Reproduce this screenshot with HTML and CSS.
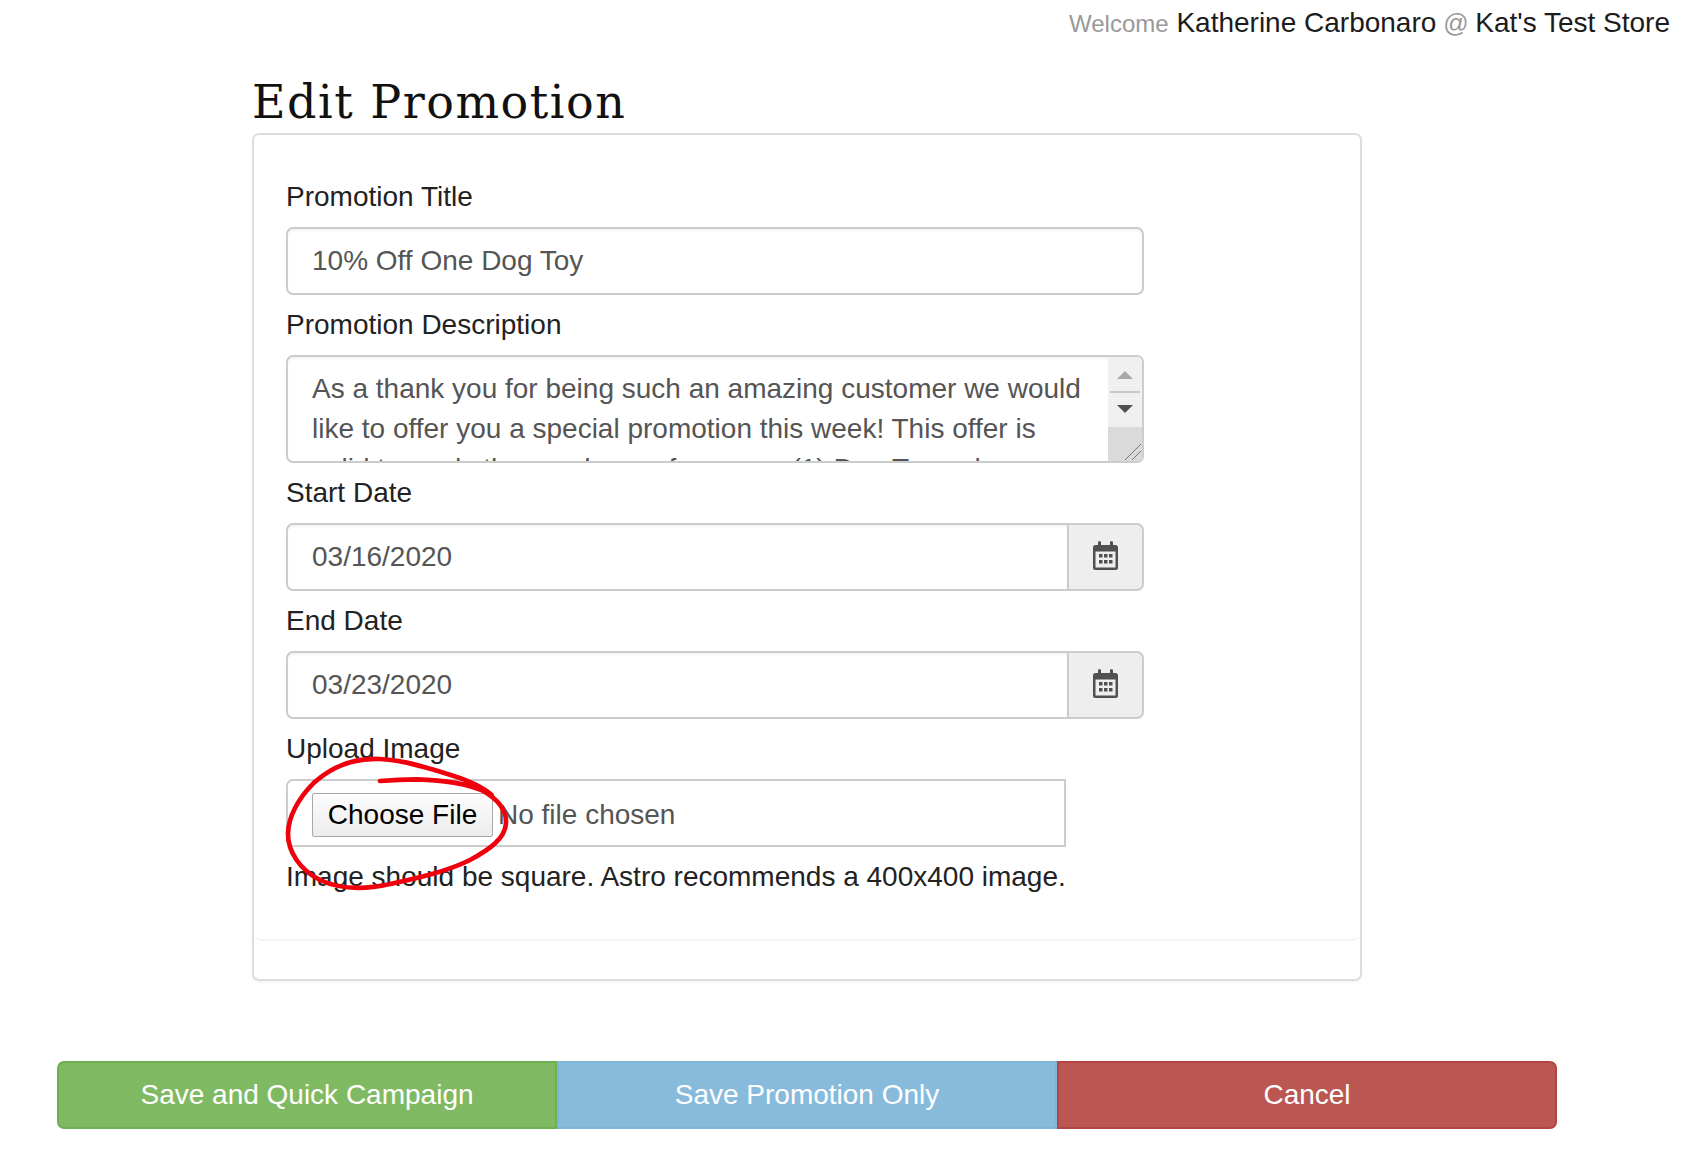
FILE: index.html
```html
<!DOCTYPE html>
<html lang="en">
<head>
<meta charset="utf-8">
<title>Edit Promotion</title>
<link rel="stylesheet" href="styles.css">
</head>
<body>
<header class="topbar">
  <span class="muted">Welcome</span> <span class="strong">Katherine Carbonaro</span> <span class="at">@</span> <span class="strong">Kat's Test Store</span>
</header>
<main class="page">
  <h1 class="title">Edit Promotion</h1>
  <section class="panel">
    <form class="panel-body">
      <div class="column">
        <label class="label">Promotion Title</label>
        <input class="control" type="text" value="10% Off One Dog Toy">
        <label class="label">Promotion Description</label>
        <div class="textarea-wrap">
          <textarea class="textarea" rows="3">As a thank you for being such an amazing customer we would like to offer you a special promotion this week! This offer is valid towards the purchase of one any (1) Dog Toy only.</textarea>
          <div class="scrollbar">
            <svg class="sb-arrows" width="34" height="104" viewBox="0 0 34 104" aria-hidden="true">
              <path d="M9 22 L17 14 L25 22 Z" fill="#a9a9a9"/>
              <rect x="2" y="34" width="30" height="2" fill="#c8c8c8"/>
              <path d="M9 48 L25 48 L17 56 Z" fill="#505050"/>
              <rect x="0" y="70" width="34" height="34" fill="#dadada"/>
              <path d="M17 103 L33 87 M24 103 L33 94" stroke="#777" stroke-width="1" fill="none"/>
            </svg>
          </div>
        </div>
        <label class="label">Start Date</label>
        <div class="date-group">
          <input class="control date-input" type="text" value="03/16/2020">
          <span class="addon">
            <svg class="cal" width="25" height="29" viewBox="0 0 25 29" aria-hidden="true"><path d="M2.5 4H5V1.5a1.5 1.5 0 0 1 3 0V4h9V1.5a1.5 1.5 0 0 1 3 0V4h2.500A2.500 2.500 0 0 1 25 6.500v20a2.500 2.500 0 0 1-2.500 2.500h-20A2.500 2.500 0 0 1 0 26.500v-20A2.500 2.500 0 0 1 2.500 4Z M2.500 10.500V26a.5.5 0 0 0 .5.5h19a.5.500 0 0 0 .5-.5V10.500Z" fill="#505050" fill-rule="evenodd"/><path d="M6 13h3.500v3.500H6zM11 13h3.500v3.500H11zM16 13h3.500v3.500H16zM6 19h3.500v3.500H6zM11 19h3.500v3.500H11zM16 19h3.500v3.500H16z" fill="#505050"/></svg>
          </span>
        </div>
        <label class="label">End Date</label>
        <div class="date-group">
          <input class="control date-input" type="text" value="03/23/2020">
          <span class="addon">
            <svg class="cal" width="25" height="29" viewBox="0 0 25 29" aria-hidden="true"><path d="M2.5 4H5V1.5a1.5 1.5 0 0 1 3 0V4h9V1.5a1.5 1.5 0 0 1 3 0V4h2.500A2.500 2.500 0 0 1 25 6.500v20a2.500 2.500 0 0 1-2.500 2.500h-20A2.500 2.500 0 0 1 0 26.500v-20A2.500 2.500 0 0 1 2.500 4Z M2.500 10.500V26a.5.5 0 0 0 .5.5h19a.5.500 0 0 0 .5-.5V10.500Z" fill="#505050" fill-rule="evenodd"/><path d="M6 13h3.500v3.500H6zM11 13h3.500v3.500H11zM16 13h3.500v3.500H16zM6 19h3.500v3.500H6zM11 19h3.500v3.500H11zM16 19h3.500v3.500H16z" fill="#505050"/></svg>
          </span>
        </div>
        <label class="label">Upload Image</label>
        <div class="file-row">
          <button class="file-btn" type="button">Choose File</button>
          <span class="file-name">No file chosen</span>
          <svg class="scribble" width="300" height="170" viewBox="0 0 900 510" aria-hidden="true">
            <path d="M665 195 C640 172 590 148 520 128 C450 108 400 90 330 87 C260 84 190 105 130 160 C85 205 55 260 54 310 C53 365 90 420 150 450 C210 478 280 480 360 462 C440 445 530 425 600 390 C660 358 705 325 708 280 C710 245 690 212 640 183 C590 160 510 150 440 148 C400 148 365 150 330 153" fill="none" stroke="#f0000c" stroke-width="14" stroke-linecap="round" stroke-linejoin="round"/>
          </svg>
        </div>
        <p class="hint">Image should be square. Astro recommends a 400x400 image.</p>
      </div>
    </form>
    <div class="panel-footer"></div>
  </section>
  <div class="actions">
    <button class="action action-green" type="button">Save and Quick Campaign</button>
    <button class="action action-blue" type="button">Save Promotion Only</button>
    <button class="action action-red" type="button">Cancel</button>
  </div>
</main>
</body>
</html>
```

FILE: styles.css
```css
* { box-sizing: border-box; }

html, body { margin: 0; padding: 0; background: #fff; }

body {
  font-family: "Liberation Sans", Arial, sans-serif;
  font-size: 28px;
  color: #222;
  height: 1161px;
  overflow: hidden;
}

.topbar {
  height: 46px;
  padding: 5px 28px 0 0;
  text-align: right;
  font-size: 28px;
  line-height: 36px;
  white-space: nowrap;
}
.muted, .at { color: #999; font-size: 24px; }
.at { font-size: 25px; margin: 0 -1px 0 -1px; }
.strong { color: #1c1c1c; }

.page { padding-left: 57px; }

.title {
  margin: 26px 0 0 195px;
  font-family: "DejaVu Serif", serif;
  font-weight: 400;
  font-size: 46px;
  letter-spacing: 1.5px;
  line-height: 60px;
  height: 61px;
  color: #111;
}

.panel {
  margin-left: 195px;
  width: 1110px;
  height: 848px;
  border: 2px solid #ddd;
  border-radius: 7px;
  box-shadow: 0 2px 2px rgba(0,0,0,.04);
}

.panel-body {
  height: 806px;
  padding: 32px 32px 0;
  border-bottom: 2px solid #f4f4f4;
  border-radius: 0 0 7px 7px;
}

.column { width: 858px; }

.label {
  display: block;
  height: 60px;
  padding-top: 10px;
  line-height: 40px;
  color: #222;
}

.control {
  display: block;
  width: 100%;
  height: 68px;
  padding: 0 24px;
  border: 2px solid #ccc;
  border-radius: 7px;
  font: inherit;
  color: #555;
  box-shadow: inset 0 2px 2px rgba(0,0,0,.05);
  background: #fff;
}

.textarea-wrap {
  position: relative;
  height: 108px;
  display: flex;
  border: 2px solid #ccc;
  border-radius: 7px;
  overflow: hidden;
  box-shadow: inset 0 2px 2px rgba(0,0,0,.05);
}
.textarea {
  flex: 1;
  min-width: 0;
  border: 0;
  padding: 12px 24px 0;
  font: inherit;
  line-height: 40px;
  color: #555;
  resize: none;
  overflow: hidden;
  background: transparent;
  outline: 0;
}
.scrollbar {
  flex: 0 0 34px;
  background: #f0f0f0;
}
.sb-arrows { display: block; }

.date-group { display: flex; height: 68px; }
.date-input {
  flex: 1;
  min-width: 0;
  border-radius: 7px 0 0 7px;
  border-right: 0;
}
.addon {
  flex: 0 0 77px;
  display: flex;
  align-items: center;
  justify-content: center;
  background: #eee;
  border: 2px solid #ccc;
  border-radius: 0 7px 7px 0;
}
.cal { margin-bottom: 3px; }

.file-row {
  position: relative;
  display: flex;
  align-items: center;
  width: 780px;
  height: 68px;
  padding: 4px 0 0 24px;
  border: 2px solid #ccc;
  border-radius: 7px 0 0 7px;
}
.file-btn {
  width: 181px;
  height: 44px;
  padding: 0;
  border: 1px solid #a9a9a9;
  border-radius: 2px;
  background: linear-gradient(#fdfdfd, #ececec);
  font: inherit;
  color: #000;
}
.file-name { margin-left: 5px; color: #555; }
.scribble {
  position: absolute;
  left: -18px;
  top: -51px;
  pointer-events: none;
}

.hint {
  margin: 10px 0 0;
  line-height: 40px;
  color: #222;
  white-space: nowrap;
}

.panel-footer { height: 37px; }

.actions {
  display: flex;
  width: 1500px;
  margin-top: 80px;
}
.action {
  flex: 1;
  height: 68px;
  padding: 0;
  border: 2px solid;
  font: inherit;
  color: #fff;
}
.action-green { background: #7fba63; border-color: #6fb152; border-radius: 7px 0 0 7px; }
.action-blue { background: #88bbdb; border-color: #7fb5d8; }
.action-red { background: #bb5753; border-color: #b24541; border-radius: 0 7px 7px 0; }
```
